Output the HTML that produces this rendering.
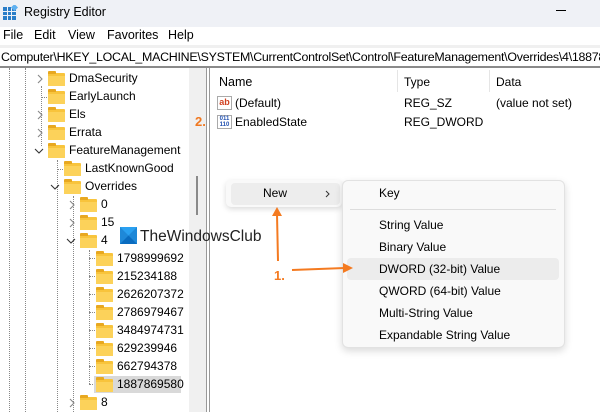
<!DOCTYPE html>
<html><head><meta charset="utf-8"><style>
*{margin:0;padding:0;box-sizing:border-box}
body{width:600px;height:412px;overflow:hidden;background:#fff;font-family:"Liberation Sans",sans-serif;font-size:12px;color:#000;position:relative}
.a{position:absolute;white-space:nowrap}
.fold{position:absolute;width:17px;height:13px;background:#f8c43c;border-radius:1px}
.fold:before{content:"";position:absolute;left:0;top:-2px;width:8px;height:3px;background:#e8a820;border-radius:1px 1px 0 0}
.fold:after{content:"";position:absolute;left:0;top:3px;width:17px;height:10px;background:#fcd25a}
.vd{position:absolute;width:0;border-left:1px dotted #888}
.hd{position:absolute;height:0;border-top:1px dotted #888}
.cr,.cd{position:absolute;width:8px;height:8px}
.mi{position:absolute;left:379px;font-size:12px}
</style></head><body>
<div class="a" style="left:0;top:0;width:600px;height:27px;background:#eff1f6"></div>
<svg class="a" style="left:3px;top:5px" width="15" height="15"><rect x="0" y="2" width="13" height="13" fill="#2a7dc8"/><g stroke="#eff1f6" stroke-width="1"><line x1="0" y1="6.5" x2="13" y2="6.5"/><line x1="0" y1="10.5" x2="13" y2="10.5"/><line x1="4.5" y1="2" x2="4.5" y2="15"/><line x1="8.5" y1="2" x2="8.5" y2="15"/></g><rect x="9" y="0" width="5" height="5" fill="#5fb0f0" transform="rotate(45 11.5 2.5)"/></svg>
<div class="a" style="left:24px;top:5px;font-size:12.5px">Registry Editor</div>
<div class="a" style="left:556px;top:10px;width:10px;height:1px;background:#000"></div>
<div class="a" style="left:3px;top:28px;font-size:12.5px">File</div>
<div class="a" style="left:34px;top:28px;font-size:12.5px">Edit</div>
<div class="a" style="left:68px;top:28px;font-size:12.5px">View</div>
<div class="a" style="left:107px;top:28px;font-size:12.5px">Favorites</div>
<div class="a" style="left:168px;top:28px;font-size:12.5px">Help</div>
<div class="a" style="left:0;top:45px;width:600px;height:3px;background:#f0f0f0"></div>
<div class="a" style="left:0;top:66px;width:600px;height:2px;background:#8a8a8a"></div>
<div class="a" style="left:0;top:48px;width:600px;height:18px;overflow:hidden"><div class="a" style="left:1px;top:2px;font-size:12.4px;letter-spacing:-0.25px">Computer\HKEY_LOCAL_MACHINE\SYSTEM\CurrentControlSet\Control\FeatureManagement\Overrides\4\1887869580</div></div>
<div class="a" style="left:189px;top:68px;width:17px;height:344px;background:#f0f0f0"></div>
<div class="a" style="left:196px;top:176px;width:2px;height:39px;background:#8a8a8a"></div>
<div class="a" style="left:206px;top:68px;width:1px;height:344px;background:#999"></div>
<div class="a" style="left:209px;top:68px;width:1px;height:344px;background:#999"></div>
<div class="vd" style="left:9px;top:68px;height:344px"></div>
<div class="vd" style="left:25px;top:68px;height:344px"></div>
<div class="vd" style="left:41px;top:86px;height:60px"></div>
<div class="vd" style="left:57px;top:160px;height:252px"></div>
<div class="vd" style="left:73px;top:196px;height:216px"></div>
<div class="vd" style="left:89px;top:250px;height:134px"></div>
<div class="hd" style="left:41px;top:97px;width:6px"></div>
<div class="hd" style="left:57px;top:169px;width:6px"></div>
<div class="hd" style="left:89px;top:258px;width:6px"></div>
<div class="hd" style="left:89px;top:276px;width:6px"></div>
<div class="hd" style="left:89px;top:294px;width:6px"></div>
<div class="hd" style="left:89px;top:312px;width:6px"></div>
<div class="hd" style="left:89px;top:330px;width:6px"></div>
<div class="hd" style="left:89px;top:348px;width:6px"></div>
<div class="hd" style="left:89px;top:366px;width:6px"></div>
<div class="hd" style="left:89px;top:384px;width:6px"></div>
<svg class="a" style="left:0;top:0" width="190" height="412"><g fill="none" stroke="#888" stroke-width="1.1">
<polyline points="38,75 42,79 38,83"/>
<polyline points="38,111 42,115 38,119"/>
<polyline points="38,129 42,133 38,137"/>
<polyline points="35,149 39,153 43,149" stroke="#333"/>
<polyline points="51,185 55,189 59,185" stroke="#333"/>
<polyline points="70,201 74,205 70,209"/>
<polyline points="70,219 74,223 70,227"/>
<polyline points="67,239 71,243 75,239" stroke="#333"/>
<polyline points="70,399 74,403 70,407"/>
</g></svg>
<div class="fold" style="left:48px;top:73px"></div><div class="a" style="left:69px;top:71px">DmaSecurity</div>
<div class="fold" style="left:48px;top:91px"></div><div class="a" style="left:69px;top:89px">EarlyLaunch</div>
<div class="fold" style="left:48px;top:109px"></div><div class="a" style="left:69px;top:107px">Els</div>
<div class="fold" style="left:48px;top:127px"></div><div class="a" style="left:69px;top:125px">Errata</div>
<div class="fold" style="left:48px;top:145px"></div><div class="a" style="left:69px;top:143px">FeatureManagement</div>
<div class="fold" style="left:64px;top:163px"></div><div class="a" style="left:85px;top:161px">LastKnownGood</div>
<div class="fold" style="left:64px;top:181px"></div><div class="a" style="left:85px;top:179px">Overrides</div>
<div class="fold" style="left:80px;top:199px"></div><div class="a" style="left:101px;top:197px">0</div>
<div class="fold" style="left:80px;top:217px"></div><div class="a" style="left:101px;top:215px">15</div>
<div class="fold" style="left:80px;top:235px"></div><div class="a" style="left:101px;top:233px">4</div>
<div class="fold" style="left:96px;top:253px"></div><div class="a" style="left:117px;top:251px">1798999692</div>
<div class="fold" style="left:96px;top:271px"></div><div class="a" style="left:117px;top:269px">215234188</div>
<div class="fold" style="left:96px;top:289px"></div><div class="a" style="left:117px;top:287px">2626207372</div>
<div class="fold" style="left:96px;top:307px"></div><div class="a" style="left:117px;top:305px">2786979467</div>
<div class="fold" style="left:96px;top:325px"></div><div class="a" style="left:117px;top:323px">3484974731</div>
<div class="fold" style="left:96px;top:343px"></div><div class="a" style="left:117px;top:341px">629239946</div>
<div class="fold" style="left:96px;top:361px"></div><div class="a" style="left:117px;top:359px">662794378</div>
<div class="a" style="left:94px;top:376px;width:87px;height:17px;background:#d9d9d9"></div>
<div class="fold" style="left:96px;top:379px"></div><div class="a" style="left:117px;top:377px">1887869580</div>
<div class="fold" style="left:80px;top:397px"></div><div class="a" style="left:101px;top:395px">8</div>
<div class="a" style="left:219px;top:75px;font-size:12.5px">Name</div>
<div class="a" style="left:397px;top:70px;width:1px;height:22px;background:#e5e5e5"></div>
<div class="a" style="left:404px;top:75px">Type</div>
<div class="a" style="left:489px;top:70px;width:1px;height:22px;background:#e5e5e5"></div>
<div class="a" style="left:496px;top:75px">Data</div>
<div class="a" style="left:217px;top:96px;width:15px;height:14px;border:1px solid #aaa;background:#fff;color:#d04020;font-size:9px;font-weight:bold;line-height:11px;text-align:center">ab</div>
<div class="a" style="left:235px;top:96px">(Default)</div>
<div class="a" style="left:404px;top:96px">REG_SZ</div>
<div class="a" style="left:496px;top:96px">(value not set)</div>
<div class="a" style="left:217px;top:115px;width:15px;height:14px;border:1px solid #aaa;background:#fff;color:#2050b0;font-size:6px;font-weight:bold;line-height:6px;text-align:center">011<br>110</div>
<div class="a" style="left:235px;top:115px">EnabledState</div>
<div class="a" style="left:404px;top:115px">REG_DWORD</div>
<div class="a" style="left:195px;top:114px;color:#f07820;font-weight:bold;font-size:13px">2.</div>
<svg class="a" style="left:120px;top:227px" width="17" height="17"><rect width="17" height="17" fill="#1e88d8"/><polygon points="0,0 17,0 8.5,8.5" fill="#2aa0f0"/><polygon points="0,17 17,17 8.5,8.5" fill="#0a6cc0"/></svg>
<div class="a" style="left:140px;top:228px;font-size:15.5px;color:#222">TheWindowsClub</div>
<div class="a" style="left:226px;top:180px;width:116px;height:27px;background:#f9f9f9;border-radius:5px;box-shadow:0 2px 6px rgba(0,0,0,.15)"></div>
<div class="a" style="left:231px;top:183px;width:109px;height:22px;background:#ededed;border-radius:4px"></div>
<div class="a" style="left:263px;top:186px">New</div>
<svg class="a" style="left:325px;top:190px" width="6" height="8"><polyline points="1,1 4,4 1,7" fill="none" stroke="#333" stroke-width="1"/></svg>
<div class="a" style="left:342px;top:180px;width:223px;height:168px;background:#f9f9f9;border:1px solid #e2e2e2;border-radius:6px;box-shadow:0 3px 8px rgba(0,0,0,.15)"></div>
<div class="a" style="left:350px;top:209px;width:206px;height:1px;background:#ddd"></div>
<div class="a" style="left:347px;top:258px;width:212px;height:22px;background:#ececec;border-radius:4px"></div>
<div class="mi" style="top:186px">Key</div>
<div class="mi" style="top:218px">String Value</div>
<div class="mi" style="top:240px">Binary Value</div>
<div class="mi" style="top:262px">DWORD (32-bit) Value</div>
<div class="mi" style="top:284px">QWORD (64-bit) Value</div>
<div class="mi" style="top:306px">Multi-String Value</div>
<div class="mi" style="top:328px">Expandable String Value</div>
<svg class="a" style="left:0;top:0" width="600" height="412"><g stroke="#f47a20" stroke-width="2" fill="#f47a20"><line x1="278" y1="261" x2="277" y2="214"/><polygon points="277,207 272,216 282,216" stroke="none"/><line x1="292" y1="270" x2="345" y2="268"/><polygon points="353,268 343,263 343,273" stroke="none"/></g></svg>
<div class="a" style="left:274px;top:268px;color:#f47a20;font-weight:bold;font-size:13px">1.</div>
</body></html>
